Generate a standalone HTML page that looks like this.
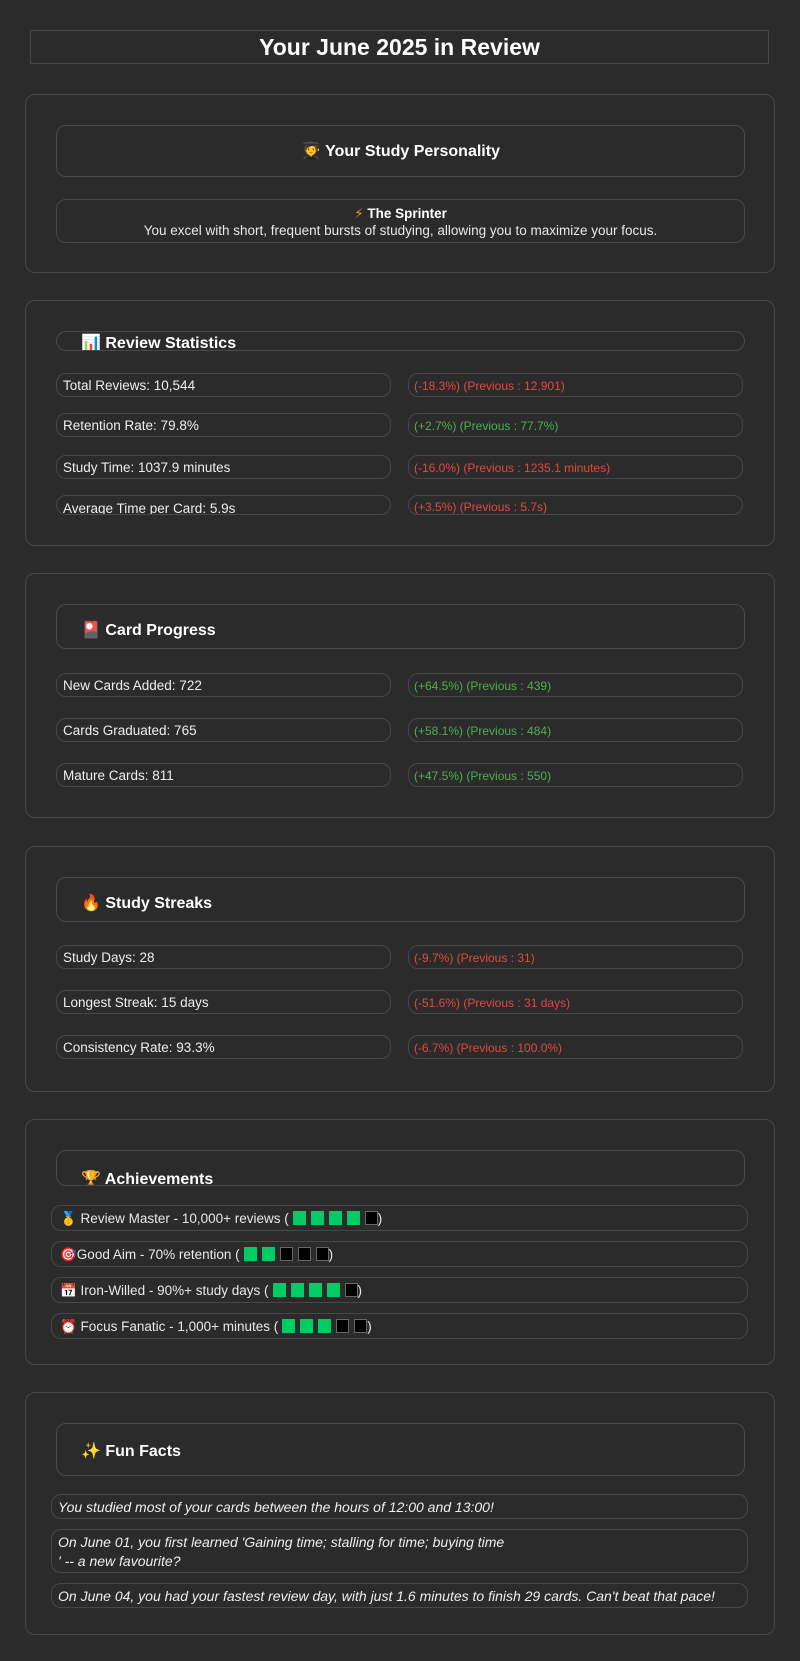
<!DOCTYPE html>
<html><head><meta charset="utf-8"><style>
*{margin:0;padding:0;box-sizing:border-box}
body{width:800px;height:1661px;background:#2b2b2b;color:#e8e8e8;font-family:"Liberation Sans","DejaVu Sans",sans-serif;position:relative;overflow:hidden}
.a{position:absolute;border:1px solid #474747;border-radius:10px}
.card{position:absolute;left:25px;width:750px;border:1px solid #474747;border-radius:10px}
.h{position:absolute;left:56px;width:689px;border:1px solid #4a4a4a;border-radius:10px;overflow:hidden;font-weight:bold;font-size:16px;color:#fff}
.h span{position:absolute;left:24px;white-space:nowrap}
.l{left:56px;width:335px;height:24px;font-size:13.5px;padding-left:6px;line-height:24px;overflow:hidden;white-space:nowrap;color:#eee}
.r{left:408px;width:335px;height:24px;font-size:12px;padding-left:5px;line-height:24px;white-space:nowrap}
.red{color:#e0493e}.grn{color:#4caf50}
.ach{left:51px;width:697px;height:26px;font-size:13.5px;line-height:26px;padding-left:8px;white-space:nowrap}
.sq{display:inline-block;width:13px;height:14px;background:#00cc66;margin-right:5px;vertical-align:-2px}
.sq.k{background:#000;border:1px solid #666}
.sq.first{margin-left:4px}
.f{left:51px;width:697px;font-size:14px;font-style:italic;padding:3px 6px;line-height:19px;color:#eee}
</style></head><body>
<div class="a" style="left:30px;top:30px;width:739px;height:34px;border-radius:0;text-align:center;font-weight:bold;font-size:23px;line-height:32px;color:#fff">Your June 2025 in Review</div>

<div class="card" style="top:94px;height:179px"></div>
<div class="h" style="top:125px;height:52px;text-align:center"><span style="left:0;right:0;top:15px">🧑‍🎓 Your Study Personality</span></div>
<div class="a" style="left:56px;top:199px;width:689px;height:44px;text-align:center;font-size:13.5px">
<div style="font-weight:bold;color:#fff;margin-top:5px;line-height:17px"><span style="color:#f58a2a">⚡</span> The Sprinter</div>
<div style="line-height:18px">You excel with short, frequent bursts of studying, allowing you to maximize your focus.</div></div>

<div class="card" style="top:300px;height:246px"></div>
<div class="h" style="top:331px;height:20px"><span style="top:1px">📊 Review Statistics</span></div>
<div class="a l" style="top:373px">Total Reviews: 10,544</div><div class="a r red" style="top:373px">(-18.3%) (Previous : 12,901)</div>
<div class="a l" style="top:413px">Retention Rate: 79.8%</div><div class="a r grn" style="top:413px">(+2.7%) (Previous : 77.7%)</div>
<div class="a l" style="top:455px">Study Time: 1037.9 minutes</div><div class="a r red" style="top:455px">(-16.0%) (Previous : 1235.1 minutes)</div>
<div class="a l" style="top:495px;height:20px;line-height:26px">Average Time per Card: 5.9s</div><div class="a r red" style="top:495px;height:20px;line-height:22px">(+3.5%) (Previous : 5.7s)</div>

<div class="card" style="top:573px;height:245px"></div>
<div class="h" style="top:604px;height:45px"><span style="top:15px">🎴 Card Progress</span></div>
<div class="a l" style="top:673px">New Cards Added: 722</div><div class="a r grn" style="top:673px">(+64.5%) (Previous : 439)</div>
<div class="a l" style="top:718px">Cards Graduated: 765</div><div class="a r grn" style="top:718px">(+58.1%) (Previous : 484)</div>
<div class="a l" style="top:763px">Mature Cards: 811</div><div class="a r grn" style="top:763px">(+47.5%) (Previous : 550)</div>

<div class="card" style="top:846px;height:246px"></div>
<div class="h" style="top:877px;height:45px"><span style="top:15px">🔥 Study Streaks</span></div>
<div class="a l" style="top:945px">Study Days: 28</div><div class="a r red" style="top:945px">(-9.7%) (Previous : 31)</div>
<div class="a l" style="top:990px">Longest Streak: 15 days</div><div class="a r red" style="top:990px">(-51.6%) (Previous : 31 days)</div>
<div class="a l" style="top:1035px">Consistency Rate: 93.3%</div><div class="a r red" style="top:1035px">(-6.7%) (Previous : 100.0%)</div>

<div class="card" style="top:1119px;height:246px"></div>
<div class="h" style="top:1150px;height:36px"><span style="top:18px">🏆 Achievements</span></div>
<div class="a ach" style="top:1205px">🥇 Review Master - 10,000+ reviews (<i class="sq first"></i><i class="sq"></i><i class="sq"></i><i class="sq"></i><i class="sq k" style="margin-right:0"></i>)</div>
<div class="a ach" style="top:1241px">🎯Good Aim - 70% retention (<i class="sq first"></i><i class="sq"></i><i class="sq k"></i><i class="sq k"></i><i class="sq k" style="margin-right:0"></i>)</div>
<div class="a ach" style="top:1277px">📅 Iron-Willed - 90%+ study days (<i class="sq first"></i><i class="sq"></i><i class="sq"></i><i class="sq"></i><i class="sq k" style="margin-right:0"></i>)</div>
<div class="a ach" style="top:1313px">⏰ Focus Fanatic - 1,000+ minutes (<i class="sq first"></i><i class="sq"></i><i class="sq"></i><i class="sq k"></i><i class="sq k" style="margin-right:0"></i>)</div>

<div class="card" style="top:1392px;height:243px"></div>
<div class="h" style="top:1423px;height:53px"><span style="top:17px">✨ Fun Facts</span></div>
<div class="a f" style="top:1494px;height:25px">You studied most of your cards between the hours of 12:00 and 13:00!</div>
<div class="a f" style="top:1529px;height:44px">On June 01, you first learned 'Gaining time; stalling for time; buying time<br>' -- a new favourite?</div>
<div class="a f" style="top:1583px;height:25px">On June 04, you had your fastest review day, with just 1.6 minutes to finish 29 cards. Can't beat that pace!</div>
</body></html>
